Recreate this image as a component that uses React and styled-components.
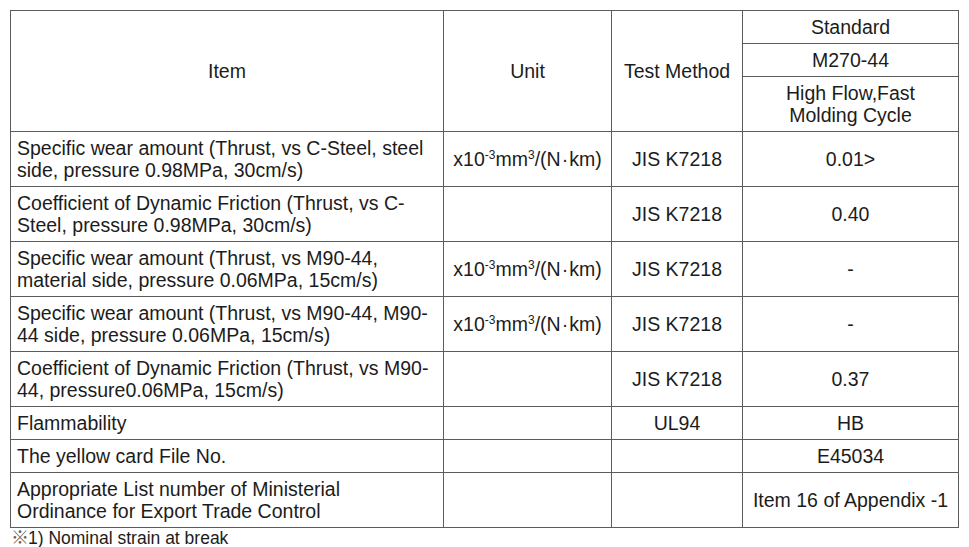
import styled, { createGlobalStyle } from "styled-components";

const GlobalStyle = createGlobalStyle`
  body {
    margin: 0;
    background: #ffffff;
    font-family: "Liberation Sans", Arial, sans-serif;
    color: #1c1c1c;
  }
`;

const rows = [
    {
        item: <>Specific wear amount (Thrust, vs C-Steel, steel<br />side, pressure 0.98MPa, 30cm/s)</>,
        unit: true,
        method: "JIS K7218",
        value: "0.01>",
        tall: true,
    },
    {
        item: <>Coefficient of Dynamic Friction (Thrust, vs C-<br />Steel, pressure 0.98MPa, 30cm/s)</>,
        unit: false,
        method: "JIS K7218",
        value: "0.40",
        tall: true,
    },
    {
        item: <>Specific wear amount (Thrust, vs M90-44,<br />material side, pressure 0.06MPa, 15cm/s)</>,
        unit: true,
        method: "JIS K7218",
        value: "-",
        tall: true,
    },
    {
        item: <>Specific wear amount (Thrust, vs M90-44, M90-<br />44 side, pressure 0.06MPa, 15cm/s)</>,
        unit: true,
        method: "JIS K7218",
        value: "-",
        tall: true,
    },
    {
        item: <>Coefficient of Dynamic Friction (Thrust, vs M90-<br />44, pressure0.06MPa, 15cm/s)</>,
        unit: false,
        method: "JIS K7218",
        value: "0.37",
        tall: true,
    },
    { item: "Flammability", unit: false, method: "UL94", value: "HB", tall: false },
    { item: "The yellow card File No.", unit: false, method: "", value: "E45034", tall: false },
    {
        item: <>Appropriate List number of Ministerial<br />Ordinance for Export Trade Control</>,
        unit: false,
        method: "",
        value: "Item 16 of Appendix -1",
        tall: true,
    },
];

const Unit = () => (
    <UnitText>
        x10<Sup>-3</Sup>mm<Sup>3</Sup>/(N<Dot>·</Dot>km)
    </UnitText>
);

const App = () => {
    return (
        <>
            <GlobalStyle />
            <Page>
                <Table>
                    <colgroup>
                        <col style={{ width: 433 }} />
                        <col style={{ width: 168 }} />
                        <col style={{ width: 131 }} />
                        <col style={{ width: 216 }} />
                    </colgroup>
                    <thead>
                        <Row $h={33}>
                            <Cell rowSpan={3} $center>Item</Cell>
                            <Cell rowSpan={3} $center>Unit</Cell>
                            <Cell rowSpan={3} $center>Test Method</Cell>
                            <Cell $center>Standard</Cell>
                        </Row>
                        <Row $h={33}>
                            <Cell $center>M270-44</Cell>
                        </Row>
                        <Row $h={55}>
                            <Cell $center>High Flow,Fast<br />Molding Cycle</Cell>
                        </Row>
                    </thead>
                    <tbody>
                        {rows.map((r, i) => (
                            <Row key={i} $h={r.tall ? 55 : 33}>
                                <Cell>{r.item}</Cell>
                                <Cell $center>{r.unit ? <Unit /> : null}</Cell>
                                <Cell $center>{r.method}</Cell>
                                <Cell $center>{r.value}</Cell>
                            </Row>
                        ))}
                    </tbody>
                </Table>
                <Footnote><Mark>※</Mark>1) Nominal strain at break</Footnote>
            </Page>
        </>
    );
};

export default App;

const Page = styled.div`
  padding: 10px 0 0 10px;
  width: 969px;
  height: 547px;
  box-sizing: border-box;
  overflow: hidden;
`;

const Table = styled.table`
  border-collapse: collapse;
  table-layout: fixed;
  width: 949px;
  font-size: 19.5px;
  line-height: 22px;
`;

const Row = styled.tr`
  height: ${(p) => p.$h}px;
`;

const Cell = styled.td`
  border: 1px solid #5c5c5c;
  padding: 0 6px;
  vertical-align: middle;
  text-align: ${(p) => (p.$center ? "center" : "left")};
  font-weight: normal;
  white-space: nowrap;
`;

const UnitText = styled.span`
  white-space: nowrap;
`;

const Sup = styled.sup`
  font-size: 12px;
  line-height: 0;
  vertical-align: 7px;
`;

const Dot = styled.span`
  padding: 0 1px;
`;

const Footnote = styled.div`
  font-size: 17.5px;
  line-height: 18px;
  padding-left: 1px;
  margin-top: -1px;
  white-space: nowrap;
`;

const Mark = styled.span`
  font-family: "Noto Sans CJK JP", sans-serif;
  font-size: 18px;
  line-height: 18px;
  color: #666;
  margin-right: -1px;
`;
